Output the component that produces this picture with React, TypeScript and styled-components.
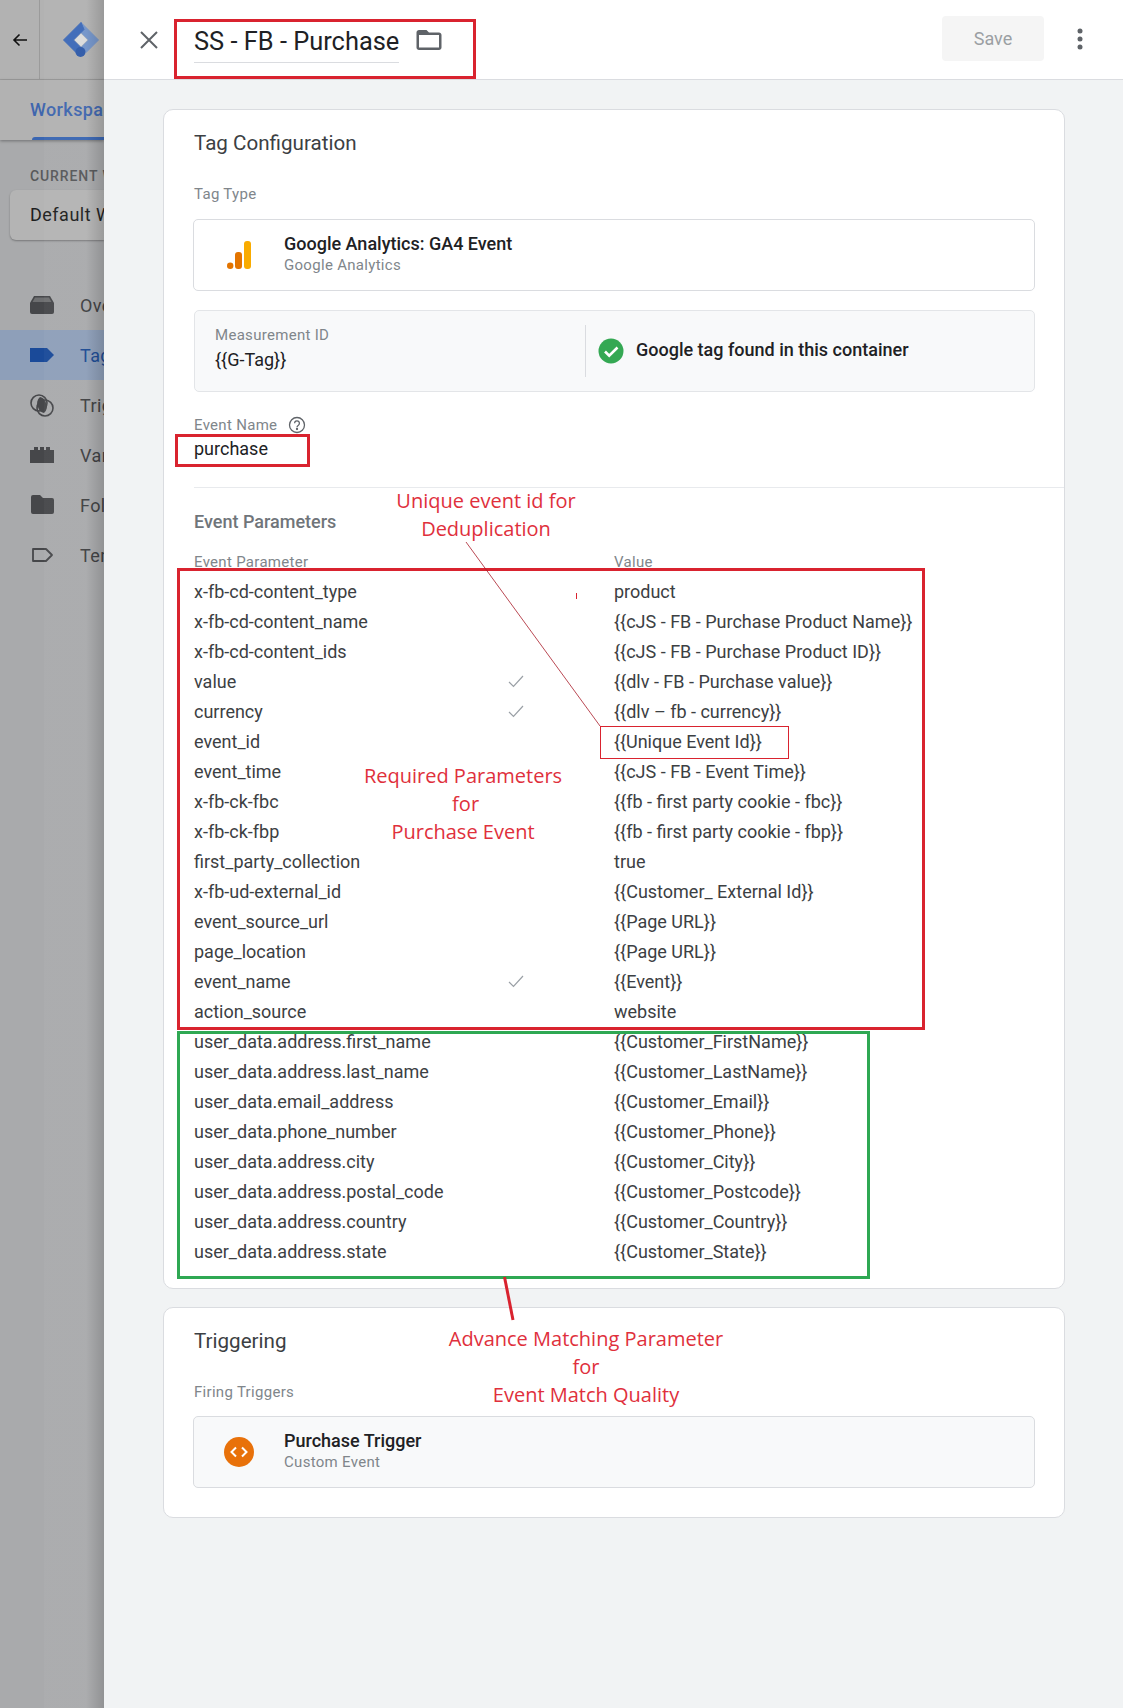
import React from "react";
import styled, { createGlobalStyle } from "styled-components";

const GlobalStyle = createGlobalStyle`
    html, body {
        margin: 0;
        padding: 0;
        background: #f1f3f4;
    }
    * {
        box-sizing: border-box;
    }
`;

const Page = styled.div`
    position: relative;
    display: flex;
    width: 1123px;
    height: 1708px;
    overflow: hidden;
    font-family: Roboto, "Liberation Sans", sans-serif;
`;

/* dimmed app behind the drawer */

const Sidebar = styled.aside`
    position: relative;
    flex: 0 0 104px;
    background: #a9aaac;
    overflow: hidden;
    white-space: nowrap;
`;

const SideShade = styled.div`
    position: absolute;
    top: 0;
    bottom: 0;
    left: 44px;
    right: 0;
    background: linear-gradient(90deg, rgba(255,255,255,0.03) 0, rgba(255,255,255,0.03) 70%, rgba(0,0,0,0.14) 100%);
`;

const AppBar = styled.div`
    display: flex;
    align-items: center;
    height: 80px;
    background: #b2b2b2;
    border-bottom: 1px solid #9e9e9e;
`;

const BackCell = styled.div`
    display: flex;
    align-items: center;
    justify-content: center;
    width: 40px;
    height: 79px;
    border-right: 1px solid #9b9b9b;
`;

const LogoCell = styled.div`
    display: flex;
    margin-left: 22px;
`;

const TabBar = styled.div`
    position: relative;
    height: 60px;
    padding: 20px 0 0 30px;
    background: #b2b2b2;
    box-shadow: 0 1px 3px rgba(0,0,0,0.35);
    font-size: 18px;
    font-weight: 500;
    line-height: 20px;
    letter-spacing: 0.4px;
    color: #3f66ae;
`;

const TabLine = styled.div`
    position: absolute;
    left: 32px;
    right: 0;
    bottom: 0;
    height: 3px;
    border-radius: 3px 0 0 0;
    background: #3a66b2;
`;

const WorkspaceLabel = styled.div`
    margin: 27px 0 0 30px;
    font-size: 14px;
    font-weight: 500;
    line-height: 18px;
    letter-spacing: 0.9px;
    color: #57585a;
`;

const WorkspaceBox = styled.div`
    height: 50px;
    margin: 5px 0 0 10px;
    padding-left: 20px;
    border-radius: 6px 0 0 6px;
    background: #b4b4b4;
    box-shadow: 0 1px 2px rgba(0,0,0,0.3);
    font-size: 18px;
    line-height: 50px;
    letter-spacing: 0.5px;
    color: #1e1e1e;
`;

const SideNav = styled.nav`
    margin-top: 40px;
`;

const NavItem = styled.div<{ active?: boolean }>`
    display: flex;
    align-items: center;
    gap: 26px;
    height: 50px;
    padding-left: 30px;
    font-size: 18px;
    letter-spacing: 0.4px;
    color: ${props => props.active ? "#1b4a93" : "#3f4042"};
    background: ${props => props.active ? "#8e9fb9" : "transparent"};
    svg {
        flex: none;
    }
`;

/* drawer */

const Drawer = styled.main`
    position: relative;
    flex: 1;
    display: flex;
    flex-direction: column;
    background: #f1f3f4;
`;

const Header = styled.header`
    display: flex;
    align-items: center;
    height: 80px;
    padding: 0 8px 1px 35px;
    background: #fff;
    border-bottom: 1px solid #dadce0;
`;

const CloseButton = styled.div`
    display: flex;
    width: 32px;
    margin: 2px 23px 0 0;
    color: #5f6368;
`;

const TitleText = styled.div`
    height: 44px;
    margin-top: 3px;
    font-size: 25.4px;
    line-height: 44px;
    color: #202124;
    border-bottom: 1px solid #dadce0;
`;

const FolderButton = styled.div`
    display: flex;
    margin: 2px 0 0 15px;
    color: #5f6368;
`;

const SaveButton = styled.div`
    margin: 0 0 2px auto;
    width: 102px;
    height: 45px;
    border-radius: 4px;
    background: #f5f5f5;
    font-size: 18px;
    line-height: 46px;
    text-align: center;
    color: #9b9fa3;
`;

const MoreButton = styled.div`
    display: flex;
    justify-content: center;
    width: 71px;
    color: #5f6368;
`;

const Content = styled.div`
    display: flex;
    flex-direction: column;
    gap: 18px;
    padding: 29px 58px 0 59px;
`;

const Card = styled.section<{ bottom: number }>`
    padding: 0 29px ${props => props.bottom}px 30px;
    background: #fff;
    border: 1px solid #dadce0;
    border-radius: 10px;
`;

const CardTitle = styled.h2`
    margin: 21px 0 0;
    font-size: 20.6px;
    font-weight: 400;
    line-height: 24px;
    color: #3c4043;
`;

const FieldLabel = styled.div<{ top: number }>`
    display: flex;
    align-items: center;
    gap: 11px;
    margin-top: ${props => props.top}px;
    font-size: 15px;
    line-height: 20px;
    letter-spacing: 0.3px;
    color: #80868b;
`;

const PickerBox = styled.div<{ top: number; tinted?: boolean }>`
    display: flex;
    align-items: center;
    height: 72px;
    margin: ${props => props.top}px 0 0 -1px;
    border: 1.5px solid #dadce0;
    border-radius: 5px;
    background: ${props => props.tinted ? "#f8f9fa" : "#fff"};
`;

const PickerIcon = styled.div`
    display: flex;
    justify-content: center;
    flex: 0 0 90px;
`;

const PickerText = styled.div`
    margin-bottom: 2px;
`;

const PickerTitle = styled.div`
    font-size: 18px;
    font-weight: 500;
    line-height: 22px;
    color: #202124;
`;

const PickerSub = styled.div`
    font-size: 15px;
    line-height: 20px;
    letter-spacing: 0.3px;
    color: #80868b;
`;

const MeasureBox = styled.div`
    display: flex;
    align-items: center;
    height: 82px;
    margin-top: 19px;
    background: #f8f9fa;
    border: 1.5px solid #e3e5e8;
    border-radius: 5px;
`;

const MeasureField = styled.div`
    width: 391px;
    height: 52px;
    padding-left: 20px;
    border-right: 1px solid #dadce0;
`;

const MeasureLabel = styled.div`
    font-size: 15px;
    line-height: 20px;
    letter-spacing: 0.3px;
    color: #80868b;
`;

const MeasureValue = styled.div`
    margin-top: 3px;
    font-size: 18px;
    line-height: 24px;
    color: #202124;
`;

const FoundRow = styled.div`
    display: flex;
    align-items: center;
    gap: 12px;
    margin: 0 0 1px 12px;
    font-size: 18px;
    font-weight: 500;
    line-height: 24px;
    color: #202124;
`;

const FoundText = styled.span`
    margin-bottom: 2px;
`;

const EventNameValue = styled.div`
    margin-top: 2px;
    font-size: 18px;
    line-height: 24px;
    color: #202124;
`;

const Divider = styled.hr`
    height: 1px;
    margin: 26px -29px 0 0;
    border: 0;
    background: #e8eaed;
`;

const SectionTitle = styled.h3`
    margin: 22px 0 0;
    font-size: 18px;
    font-weight: 500;
    line-height: 24px;
    color: #70757a;
`;

const ParamGrid = styled.div`
    display: grid;
    grid-template-columns: 308px 112px 1fr;
`;

const ParamHead = styled(ParamGrid)`
    margin-top: 18px;
    margin-bottom: 4px;
    font-size: 15px;
    line-height: 20px;
    letter-spacing: 0.3px;
    color: #80868b;
`;

const ParamRow = styled(ParamGrid)`
    align-items: center;
    height: 30px;
    font-size: 18px;
    color: #3c4043;
`;

const CheckCell = styled.div`
    display: flex;
    padding-left: 6px;
    color: #9aa0a6;
`;

/* annotations drawn on top of the screenshot */

const MarkBox = styled.div<{ x: number; y: number; w: number; h: number; color: string; line: number }>`
    position: absolute;
    left: ${props => props.x}px;
    top: ${props => props.y}px;
    width: ${props => props.w}px;
    height: ${props => props.h}px;
    border: ${props => props.line}px solid ${props => props.color};
`;

const Note = styled.div<{ x: number; y: number }>`
    position: absolute;
    left: ${props => props.x}px;
    top: ${props => props.y}px;
    width: 400px;
    margin-left: -200px;
    font-family: "Open Sans", "Noto Sans", sans-serif;
    font-size: 20px;
    line-height: 28px;
    text-align: center;
    color: #e0303c;
    white-space: pre-line;
`;

const MarkLines = styled.svg`
    position: absolute;
    top: 0;
    left: 0;
    pointer-events: none;
`;

const BackIcon = () => (
    <svg width="18" height="18" viewBox="0 0 18 18" fill="none" stroke="#111" strokeWidth="1.6">
        <path d="M16 9H3M8.500 3.500 3 9l5.500 5.500" />
    </svg>
);

const GtmLogo = () => (
    <svg width="38" height="38" viewBox="0 0 38 38">
        <path d="M19 1.500 36.500 19 24 31.500 19 26.500 26.500 19 19 11.500Z" fill="#7394c9" stroke="#7394c9" strokeLinejoin="round" />
        <path d="M19 1.500 1.500 19 14 31.500 19 26.500 11.500 19 22 8.500 Z" fill="#3d69b8" stroke="#3d69b8" strokeLinejoin="round" />
        <path d="M19 12.500 25.500 19 19 25.500 12.500 19Z" fill="#dcdcdc" />
        <circle cx="18.500" cy="31" r="5" fill="#2f5aa8" />
    </svg>
);

const OverviewIcon = () => (
    <svg width="24" height="24" viewBox="0 0 24 24" fill="#46474a">
        <path d="M4 3h16l4 7v9a2 2 0 0 1-2 2H2a2 2 0 0 1-2-2v-9z" />
        <path d="M5 4.500h14l2.500 4.500H2.500z" fill="#8f9092" opacity="0.55" />
    </svg>
);

const TagIcon = () => (
    <svg width="24" height="24" viewBox="0 0 24 24" fill="#1a4a99">
        <path d="M0 5h17l7 7-7 7H0z" />
    </svg>
);

const TriggerIcon = () => (
    <svg width="24" height="24" viewBox="0 0 24 24" fill="none" stroke="#46474a" strokeWidth="1.6">
        <circle cx="9" cy="10" r="8" />
        <circle cx="15" cy="15" r="8" />
        <path d="M10 4a8 8 0 0 1 6 6 8 8 0 0 1-2 10 8 8 0 0 1-6-6 8 8 0 0 1 2-10z" fill="#46474a" stroke="none" />
    </svg>
);

const VariableIcon = () => (
    <svg width="24" height="24" viewBox="0 0 24 24" fill="#46474a">
        <path d="M0 7h4V4h4v3h2V4h4v3h2V4h4v3h4v13H0z" />
    </svg>
);

const FolderFillIcon = () => (
    <svg width="24" height="24" viewBox="0 0 24 24" fill="#46474a">
        <path d="M3 2h7l3 3h9a2 2 0 0 1 2 2v12a2 2 0 0 1-2 2H3a2 2 0 0 1-2-2V4a2 2 0 0 1 2-2z" />
    </svg>
);

const TemplateIcon = () => (
    <svg width="24" height="24" viewBox="0 0 24 24" fill="none" stroke="#46474a" strokeWidth="1.8">
        <path d="M3 6h13l6 6-6 6H3z" strokeLinejoin="round" />
    </svg>
);

const CloseIcon = () => (
    <svg width="20" height="20" viewBox="0 0 20 20" fill="none" stroke="currentColor" strokeWidth="2">
        <path d="M2 2l16 16M18 2 2 18" />
    </svg>
);

const FolderIcon = () => (
    <svg width="30" height="30" viewBox="0 0 24 24" fill="currentColor">
        <path d="M20 6h-8l-2-2H4c-1.100 0-2 .9-2 2v12c0 1.100.9 2 2 2h16c1.100 0 2-.9 2-2V8c0-1.100-.9-2-2-2zm0 12H4V8h16v10z" />
    </svg>
);

const MoreIcon = () => (
    <svg width="6" height="22" viewBox="0 0 6 22" fill="currentColor">
        <circle cx="3" cy="3" r="2.500" />
        <circle cx="3" cy="11" r="2.500" />
        <circle cx="3" cy="19" r="2.500" />
    </svg>
);

const AnalyticsIcon = () => (
    <svg width="24" height="28" viewBox="0 0 24 28">
        <circle cx="3.200" cy="24.700" r="3.200" fill="#e37400" />
        <rect x="8" y="11" width="7" height="17" rx="3" fill="#e37400" />
        <rect x="17" y="0" width="7" height="28" rx="3" fill="#f9ab00" />
    </svg>
);

const FoundIcon = () => (
    <svg width="26" height="26" viewBox="0 0 26 26">
        <circle cx="13" cy="13" r="12.500" fill="#34a853" />
        <path d="M7 13.500l4.200 4.200L19.500 9.500" fill="none" stroke="#fff" strokeWidth="2.600" />
    </svg>
);

const HelpIcon = () => (
    <svg width="18" height="18" viewBox="0 0 18 18" fill="none" stroke="#5f6368" strokeWidth="1.300">
        <circle cx="9" cy="9" r="7.500" />
        <path d="M6.600 7.200a2.400 2.400 0 1 1 3.800 2c-.9.6-1.400 1-1.400 2" />
        <circle cx="9" cy="13" r="0.500" fill="#5f6368" />
    </svg>
);

const CheckIcon = () => (
    <svg width="16" height="14" viewBox="0 0 16 14" fill="none" stroke="currentColor" strokeWidth="1.200">
        <path d="M1 8l4.500 4.500L15 2" />
    </svg>
);

const TriggerBadge = () => (
    <svg width="30" height="30" viewBox="0 0 30 30">
        <circle cx="15" cy="15" r="15" fill="#e8710a" />
        <path d="M12 10.500 7.500 15l4.500 4.500M18 10.500l4.500 4.500-4.500 4.500" fill="none" stroke="#fff" strokeWidth="2" />
    </svg>
);

const params: [string, string, boolean?][] = [
    ["x-fb-cd-content_type", "product"],
    ["x-fb-cd-content_name", "{{cJS - FB - Purchase Product Name}}"],
    ["x-fb-cd-content_ids", "{{cJS - FB - Purchase Product ID}}"],
    ["value", "{{dlv - FB - Purchase value}}", true],
    ["currency", "{{dlv – fb - currency}}", true],
    ["event_id", "{{Unique Event Id}}"],
    ["event_time", "{{cJS - FB - Event Time}}"],
    ["x-fb-ck-fbc", "{{fb - first party cookie - fbc}}"],
    ["x-fb-ck-fbp", "{{fb - first party cookie - fbp}}"],
    ["first_party_collection", "true"],
    ["x-fb-ud-external_id", "{{Customer_ External Id}}"],
    ["event_source_url", "{{Page URL}}"],
    ["page_location", "{{Page URL}}"],
    ["event_name", "{{Event}}", true],
    ["action_source", "website"],
    ["user_data.address.first_name", "{{Customer_FirstName}}"],
    ["user_data.address.last_name", "{{Customer_LastName}}"],
    ["user_data.email_address", "{{Customer_Email}}"],
    ["user_data.phone_number", "{{Customer_Phone}}"],
    ["user_data.address.city", "{{Customer_City}}"],
    ["user_data.address.postal_code", "{{Customer_Postcode}}"],
    ["user_data.address.country", "{{Customer_Country}}"],
    ["user_data.address.state", "{{Customer_State}}"],
];

const navItems: [React.ReactNode, string, boolean?][] = [
    [<OverviewIcon key="o" />, "Overview"],
    [<TagIcon key="t" />, "Tags", true],
    [<TriggerIcon key="r" />, "Triggers"],
    [<VariableIcon key="v" />, "Variables"],
    [<FolderFillIcon key="f" />, "Folders"],
    [<TemplateIcon key="e" />, "Templates"],
];

const RED = "#d9232f";
const GREEN = "#2fa853";

export default function App() {
    return (
        <Page>
            <GlobalStyle />
            <Sidebar>
                <AppBar>
                    <BackCell><BackIcon /></BackCell>
                    <LogoCell><GtmLogo /></LogoCell>
                </AppBar>
                <TabBar>
                    Workspace
                    <TabLine />
                </TabBar>
                <WorkspaceLabel>CURRENT WORKSPACE</WorkspaceLabel>
                <WorkspaceBox>Default Workspace</WorkspaceBox>
                <SideNav>
                    {navItems.map(([icon, label, active]) => (
                        <NavItem key={label} active={active}>{icon}{label}</NavItem>
                    ))}
                </SideNav>
                <SideShade />
            </Sidebar>
            <Drawer>
                <Header>
                    <CloseButton><CloseIcon /></CloseButton>
                    <TitleText>SS - FB - Purchase</TitleText>
                    <FolderButton><FolderIcon /></FolderButton>
                    <SaveButton>Save</SaveButton>
                    <MoreButton><MoreIcon /></MoreButton>
                </Header>
                <Content>
                    <Card bottom={22}>
                        <CardTitle>Tag Configuration</CardTitle>
                        <FieldLabel top={29}>Tag Type</FieldLabel>
                        <PickerBox top={15}>
                            <PickerIcon><AnalyticsIcon /></PickerIcon>
                            <PickerText>
                                <PickerTitle>Google Analytics: GA4 Event</PickerTitle>
                                <PickerSub>Google Analytics</PickerSub>
                            </PickerText>
                        </PickerBox>
                        <MeasureBox>
                            <MeasureField>
                                <MeasureLabel>Measurement ID</MeasureLabel>
                                <MeasureValue>{"{{G-Tag}}"}</MeasureValue>
                            </MeasureField>
                            <FoundRow>
                                <FoundIcon />
                                <FoundText>Google tag found in this container</FoundText>
                            </FoundRow>
                        </MeasureBox>
                        <FieldLabel top={23}>Event Name <HelpIcon /></FieldLabel>
                        <EventNameValue>purchase</EventNameValue>
                        <Divider />
                        <SectionTitle>Event Parameters</SectionTitle>
                        <ParamHead>
                            <div>Event Parameter</div>
                            <div />
                            <div>Value</div>
                        </ParamHead>
                        {params.map(([name, value, required]) => (
                            <ParamRow key={name}>
                                <div>{name}</div>
                                <CheckCell>{required && <CheckIcon />}</CheckCell>
                                <div>{value}</div>
                            </ParamRow>
                        ))}
                    </Card>
                    <Card bottom={29}>
                        <CardTitle>Triggering</CardTitle>
                        <FieldLabel top={29}>Firing Triggers</FieldLabel>
                        <PickerBox top={14} tinted>
                            <PickerIcon><TriggerBadge /></PickerIcon>
                            <PickerText>
                                <PickerTitle>Purchase Trigger</PickerTitle>
                                <PickerSub>Custom Event</PickerSub>
                            </PickerText>
                        </PickerBox>
                    </Card>
                </Content>
            </Drawer>

            <MarkBox x={174} y={19} w={302} h={60} color={RED} line={3} />
            <MarkBox x={175} y={434} w={135} h={33} color={RED} line={3} />
            <MarkBox x={177} y={568} w={748} h={462} color={RED} line={3} />
            <MarkBox x={177} y={1031} w={693} h={248} color={GREEN} line={3} />
            <MarkBox x={600} y={726} w={189} h={33} color={RED} line={1} />
            <MarkLines width="1123" height="1708" viewBox="0 0 1123 1708">
                <path d="M466 542 600 726" stroke="#a81c28" strokeWidth="0.8" fill="none" />
                <path d="M576.500 593V599" stroke={RED} strokeWidth="1" fill="none" />
                <path d="M504.500 1277 513 1320" stroke={RED} strokeWidth="3" fill="none" />
            </MarkLines>
            <Note x={486} y={487}>{"Unique event id for\nDeduplication"}</Note>
            <Note x={463} y={762}>{"Required Parameters\n\u00a0for\nPurchase Event"}</Note>
            <Note x={586} y={1325}>{"Advance Matching Parameter\nfor\nEvent Match Quality"}</Note>
        </Page>
    );
}
